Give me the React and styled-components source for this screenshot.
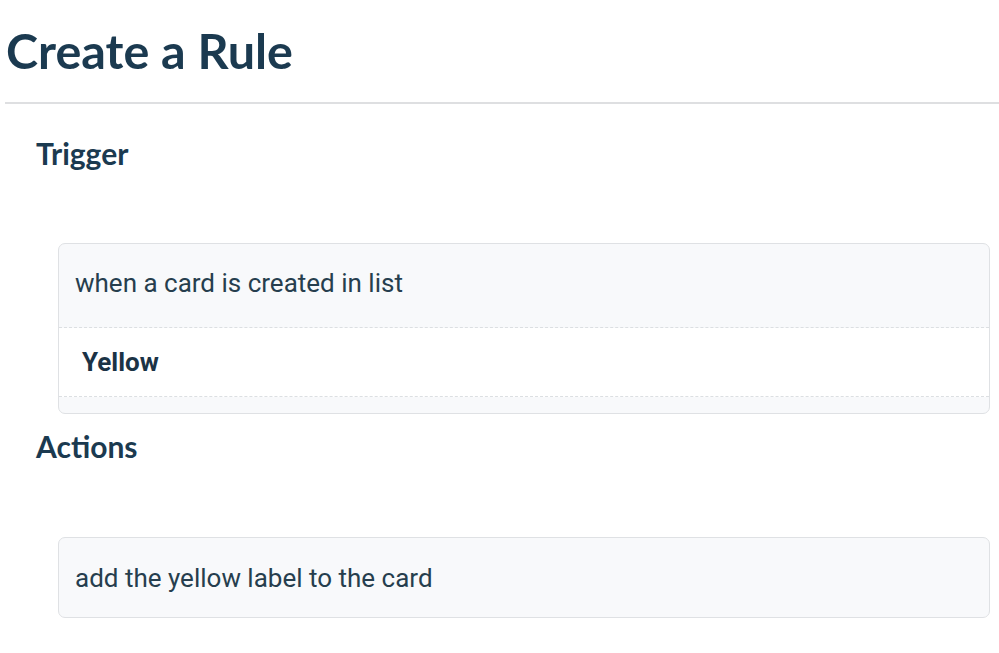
import styled, { createGlobalStyle } from "styled-components";

const GlobalStyle = createGlobalStyle`
    html, body {
        margin: 0;
        padding: 0;
        background: #ffffff;
    }
    body {
        font-family: Roboto, "Liberation Sans", sans-serif;
        color: #1d3649;
    }
`;

function Section({ title, first, children }) {
    return (
        <SectionStyled>
            <SectionTitle $first={first}>{title}</SectionTitle>
            {children}
        </SectionStyled>
    );
}

function App() {
    return (
        <Page>
            <GlobalStyle />
            <Title>Create a Rule</Title>
            <Divider />
            <Section title="Trigger" first>
                <Card>
                    <CardHead>when a card is created in list</CardHead>
                    <OptionList>
                        <Option>Yellow</Option>
                    </OptionList>
                    <CardFoot />
                </Card>
            </Section>
            <Section title="Actions">
                <Card>
                    <CardHead $last>add the yellow label to the card</CardHead>
                </Card>
            </Section>
        </Page>
    );
}

export default App;

const Page = styled.div`
    padding: 0 0 0 5px;
`;

const Title = styled.h1`
    margin: 0;
    padding: 22px 0 24px 1px;
    font-family: Lato, "Open Sans", sans-serif;
    font-weight: 700;
    font-size: 48.5px;
    line-height: 56px;
    color: #1b3a50;
`;

const Divider = styled.hr`
    margin: 0;
    border: none;
    border-top: 2px solid #dedfe1;
`;

const SectionStyled = styled.section`
    padding: 0 9px 0 31px;
`;

const SectionTitle = styled.h2`
    margin: 0;
    box-sizing: border-box;
    padding-top: ${(p) => (p.$first ? "31px" : "14px")};
    height: ${(p) => (p.$first ? "139px" : "123px")};
    font-family: Lato, "Open Sans", sans-serif;
    font-weight: 700;
    font-size: 30px;
    line-height: 36px;
    color: #1b3a50;
`;

const Card = styled.div`
    margin-left: 22px;
    border: 1px solid #dfe1e4;
    border-radius: 7px;
    background: #f8f9fb;
    overflow: hidden;
`;

const CardHead = styled.div`
    height: ${(p) => (p.$last ? "79px" : "84px")};
    box-sizing: border-box;
    display: flex;
    align-items: center;
    padding: 0 16px ${(p) => (p.$last ? "0" : "5px")};
    font-size: 26px;
    color: #263e4e;
    border-bottom: ${(p) => (p.$last ? "none" : "1px dashed #dcdfe2")};
`;

const OptionList = styled.div`
    background: #ffffff;
`;

const Option = styled.div`
    height: 68px;
    display: flex;
    align-items: center;
    padding: 0 23px;
    font-size: 26px;
    font-weight: 700;
    color: #1b3346;
    border-bottom: 1px dashed #dcdfe2;
`;

const CardFoot = styled.div`
    height: 16px;
`;
